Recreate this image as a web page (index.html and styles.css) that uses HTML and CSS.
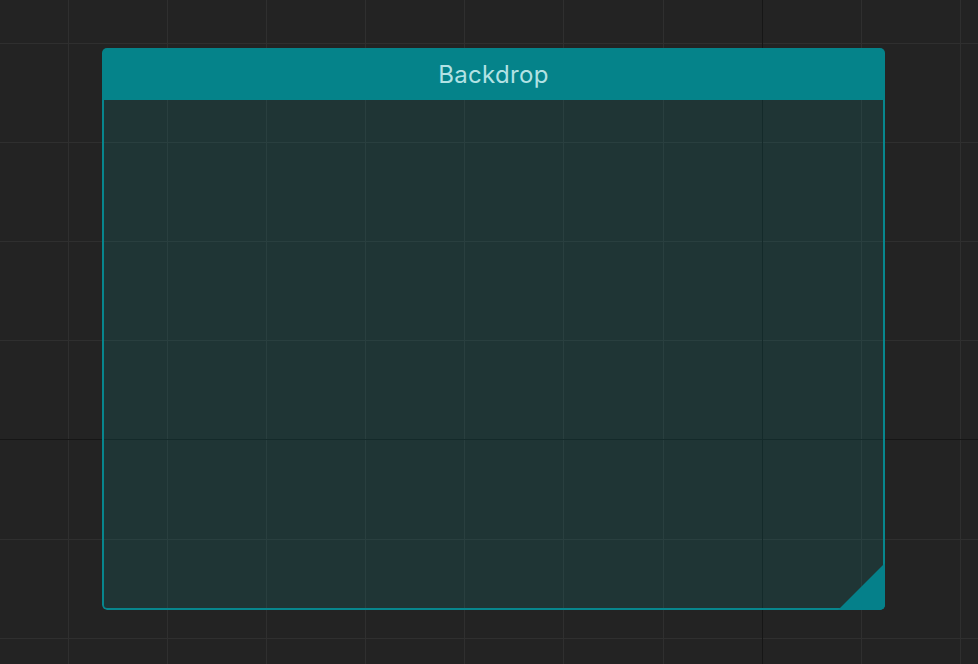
FILE: index.html
```html
<!DOCTYPE html>
<html lang="en">
<head>
<meta charset="utf-8">
<title>Backdrop</title>
<link rel="stylesheet" href="styles.css">
</head>
<body>
<div class="canvas">
  <svg class="grid" width="978" height="664" viewBox="0 0 978 664" aria-hidden="true">
    <g class="minor">
      <line x1="68.5" y1="0" x2="68.5" y2="664"/>
      <line x1="167.5" y1="0" x2="167.5" y2="664"/>
      <line x1="266.5" y1="0" x2="266.5" y2="664"/>
      <line x1="365.5" y1="0" x2="365.5" y2="664"/>
      <line x1="464.5" y1="0" x2="464.5" y2="664"/>
      <line x1="563.5" y1="0" x2="563.5" y2="664"/>
      <line x1="663.5" y1="0" x2="663.5" y2="664"/>
      <line x1="861.5" y1="0" x2="861.5" y2="664"/>
      <line x1="960.5" y1="0" x2="960.5" y2="664"/>
      <line x1="0" y1="43.5" x2="978" y2="43.5"/>
      <line x1="0" y1="142.5" x2="978" y2="142.5"/>
      <line x1="0" y1="241.5" x2="978" y2="241.5"/>
      <line x1="0" y1="340.5" x2="978" y2="340.5"/>
      <line x1="0" y1="539.5" x2="978" y2="539.5"/>
      <line x1="0" y1="638.5" x2="978" y2="638.5"/>
    </g>
    <g class="major">
      <line x1="762.5" y1="0" x2="762.5" y2="664"/>
      <line x1="0" y1="439.5" x2="978" y2="439.5"/>
    </g>
  </svg>

  <div class="node">
    <div class="node-header">Backdrop</div>
    <div class="node-body"></div>
    <div class="resize-handle"></div>
  </div>
</div>
</body>
</html>
```

FILE: styles.css
```css
html, body {
  margin: 0;
  padding: 0;
  background: #232323;
}

.canvas {
  position: relative;
  width: 978px;
  height: 664px;
  overflow: hidden;
  background: #232323;
  font-family: Inter, "Noto Sans", "Liberation Sans", sans-serif;
}

.grid {
  position: absolute;
  left: 0;
  top: 0;
  display: block;
}

.grid .minor line {
  stroke: #2f2f2f;
  stroke-width: 1;
}

.grid .major line {
  stroke: #161616;
  stroke-width: 1;
}

.node {
  position: absolute;
  left: 102px;
  top: 48px;
  width: 783px;
  height: 562px;
  display: flex;
  flex-direction: column;
  border-radius: 5px;
  overflow: hidden;
}

.node-header {
  height: 52px;
  flex: none;
  background: #05838a;
  color: #b3e2e4;
  font-size: 24px;
  line-height: 54px;
  text-align: center;
  letter-spacing: 0.3px;
}

.node-body {
  flex: 1;
  background: rgba(14, 140, 142, 0.17);
  border: 2px solid #07868d;
  border-top: none;
  border-radius: 0 0 5px 5px;
}

.resize-handle {
  position: absolute;
  right: 0;
  bottom: 0;
  width: 47px;
  height: 47px;
  background: #05808a;
  clip-path: polygon(100% 0, 100% 100%, 0 100%);
}
```
